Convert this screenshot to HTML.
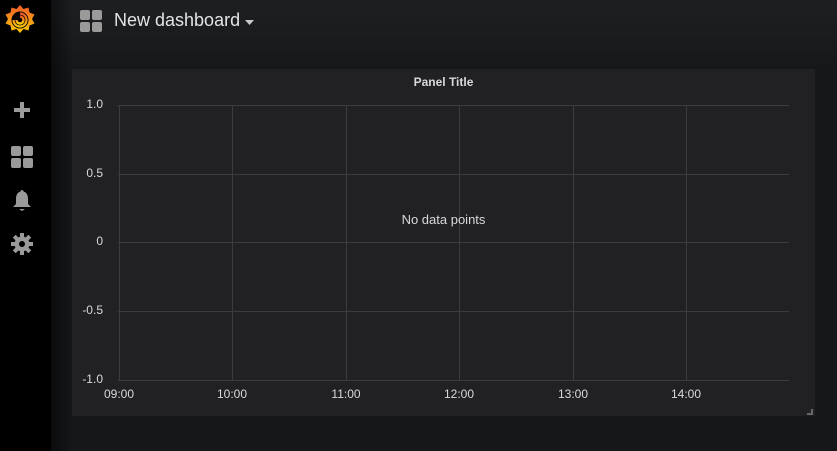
<!DOCTYPE html>
<html><head><meta charset="utf-8"><style>
*{margin:0;padding:0;box-sizing:border-box}
body{width:837px;height:451px;overflow:hidden;background:#161719;font-family:"Liberation Sans",sans-serif;position:relative}
#side{position:absolute;left:0;top:0;width:51px;height:451px;background:#000}
#main{position:absolute;left:51px;top:0;right:0;bottom:0;background:linear-gradient(#1e1f22 0,#1a1b1d 40px,#161719 70px);}
#shade{position:absolute;left:51px;top:0;width:22px;height:451px;background:linear-gradient(90deg,rgba(0,0,0,.5),rgba(0,0,0,0))}
.t{position:absolute;color:#d8d9da;font-size:12px}
#panel{position:absolute;left:72px;top:69px;width:743px;height:347px;background:#212124}
.h{position:absolute;left:118px;width:671px;height:1px;background:#3b3c3e}
.v{position:absolute;top:105px;width:1px;height:275px;background:#3b3c3e}
.yl{position:absolute;right:732px;color:#d8d9da;font-size:12px;text-align:right;width:40px}
.xl{position:absolute;top:387px;color:#d8d9da;font-size:12px;width:40px;text-align:center}
</style></head><body>
<div id="side">
<svg style="position:absolute;left:4px;top:4px" width="32" height="32" viewBox="0 0 32 32">
<defs><linearGradient id="g" x1="0" y1="1" x2="0" y2="0"><stop offset="0" stop-color="#fbca0a"/><stop offset="1" stop-color="#f05a28"/></linearGradient></defs>
<path fill="url(#g)" d="M16 1l3.5 4 5-1.5 1 5 5 2-2.5 4.5 2.5 4.5-5 2-1 5-5-1.5-3.5 4-3.5-4-5 1.5-1-5-5-2 2.5-4.5-2.5-4.5 5-2 1-5 5 1.5z"/>
<circle cx="16" cy="16" r="8.5" fill="#000"/>
<path d="M16 12.5a3.5 3.5 0 1 1-3.5 3.5M12.5 16a3.5 3.5 0 0 0 3.5 3.5" stroke="url(#g)" stroke-width="2.4" fill="none"/>
<path d="M16 9.5a6.5 6.5 0 1 1-6.5 6.5" stroke="url(#g)" stroke-width="2.2" fill="none"/>
</svg>
<svg style="position:absolute;left:12px;top:100px" width="20" height="20" viewBox="0 0 20 20"><path d="M8 2h4v6h6v4h-6v6H8v-6H2V8h6z" fill="#9a9a9a"/></svg>
<svg style="position:absolute;left:11px;top:146px" width="22" height="22" viewBox="0 0 22 22"><rect x="0" y="0" width="10" height="10" rx="2" fill="#9a9a9a"/><rect x="12" y="0" width="10" height="10" rx="2" fill="#9a9a9a"/><rect x="0" y="12" width="10" height="10" rx="2" fill="#9a9a9a"/><rect x="12" y="12" width="10" height="10" rx="2" fill="#9a9a9a"/></svg>
<svg style="position:absolute;left:12px;top:189px" width="20" height="23" viewBox="0 0 20 23"><path d="M10 1c1 0 1.5.7 1.5 1.5C15 3.5 16 6.5 16 10v5l3 3H1l3-3v-5c0-3.5 1-6.5 4.5-7.5C8.5 1.7 9 1 10 1z" fill="#9a9a9a"/><path d="M7 20h6l-3 2z" fill="#9a9a9a"/></svg>
<svg style="position:absolute;left:11px;top:233px" width="22" height="22" viewBox="0 0 22 22"><g fill="#9a9a9a"><circle cx="11" cy="11" r="7.5"/><rect x="9" y="0" width="4" height="22"/><rect x="0" y="9" width="22" height="4"/><rect x="9" y="0" width="4" height="22" transform="rotate(45 11 11)"/><rect x="9" y="0" width="4" height="22" transform="rotate(-45 11 11)"/></g><circle cx="11" cy="11" r="3" fill="#000"/></svg>
</div>
<div id="main"></div>
<div id="shade"></div>
<svg style="position:absolute;left:80px;top:10px" width="22" height="22" viewBox="0 0 22 22"><rect x="0" y="0" width="10" height="10" rx="2" fill="#9a9a9a"/><rect x="12" y="0" width="10" height="10" rx="2" fill="#9a9a9a"/><rect x="0" y="12" width="10" height="10" rx="2" fill="#9a9a9a"/><rect x="12" y="12" width="10" height="10" rx="2" fill="#9a9a9a"/></svg>
<div class="t" style="left:114px;top:10px;font-size:18px;color:#e3e4e6">New dashboard</div>
<svg style="position:absolute;left:245px;top:20px" width="9" height="6"><path d="M0 0h9L4.5 5z" fill="#c8c9ca"/></svg>
<div id="panel"></div>
<div class="t" style="left:72px;width:743px;top:75px;text-align:center;font-weight:bold;font-size:12px">Panel Title</div>
<div class="h" style="top:105px"></div><div class="h" style="top:174px"></div><div class="h" style="top:242px"></div><div class="h" style="top:311px"></div><div class="h" style="top:380px"></div>
<div class="v" style="left:119px"></div><div class="v" style="left:232px"></div><div class="v" style="left:346px"></div><div class="v" style="left:459px"></div><div class="v" style="left:573px"></div><div class="v" style="left:686px"></div>
<div class="yl" style="left:63px;top:97px">1.0</div>
<div class="yl" style="left:63px;top:166px">0.5</div>
<div class="yl" style="left:63px;top:234px">0</div>
<div class="yl" style="left:63px;top:303px">-0.5</div>
<div class="yl" style="left:63px;top:372px">-1.0</div>
<div class="xl" style="left:99px">09:00</div><div class="xl" style="left:212px">10:00</div><div class="xl" style="left:326px">11:00</div><div class="xl" style="left:439px">12:00</div><div class="xl" style="left:553px">13:00</div><div class="xl" style="left:666px">14:00</div>
<div class="t" style="left:72px;width:743px;top:212px;text-align:center;font-size:13px">No data points</div>
<svg style="position:absolute;left:807px;top:409px" width="6" height="6"><path d="M4 0h2v6H0V4h4z" fill="#666"/></svg>
</body></html>
